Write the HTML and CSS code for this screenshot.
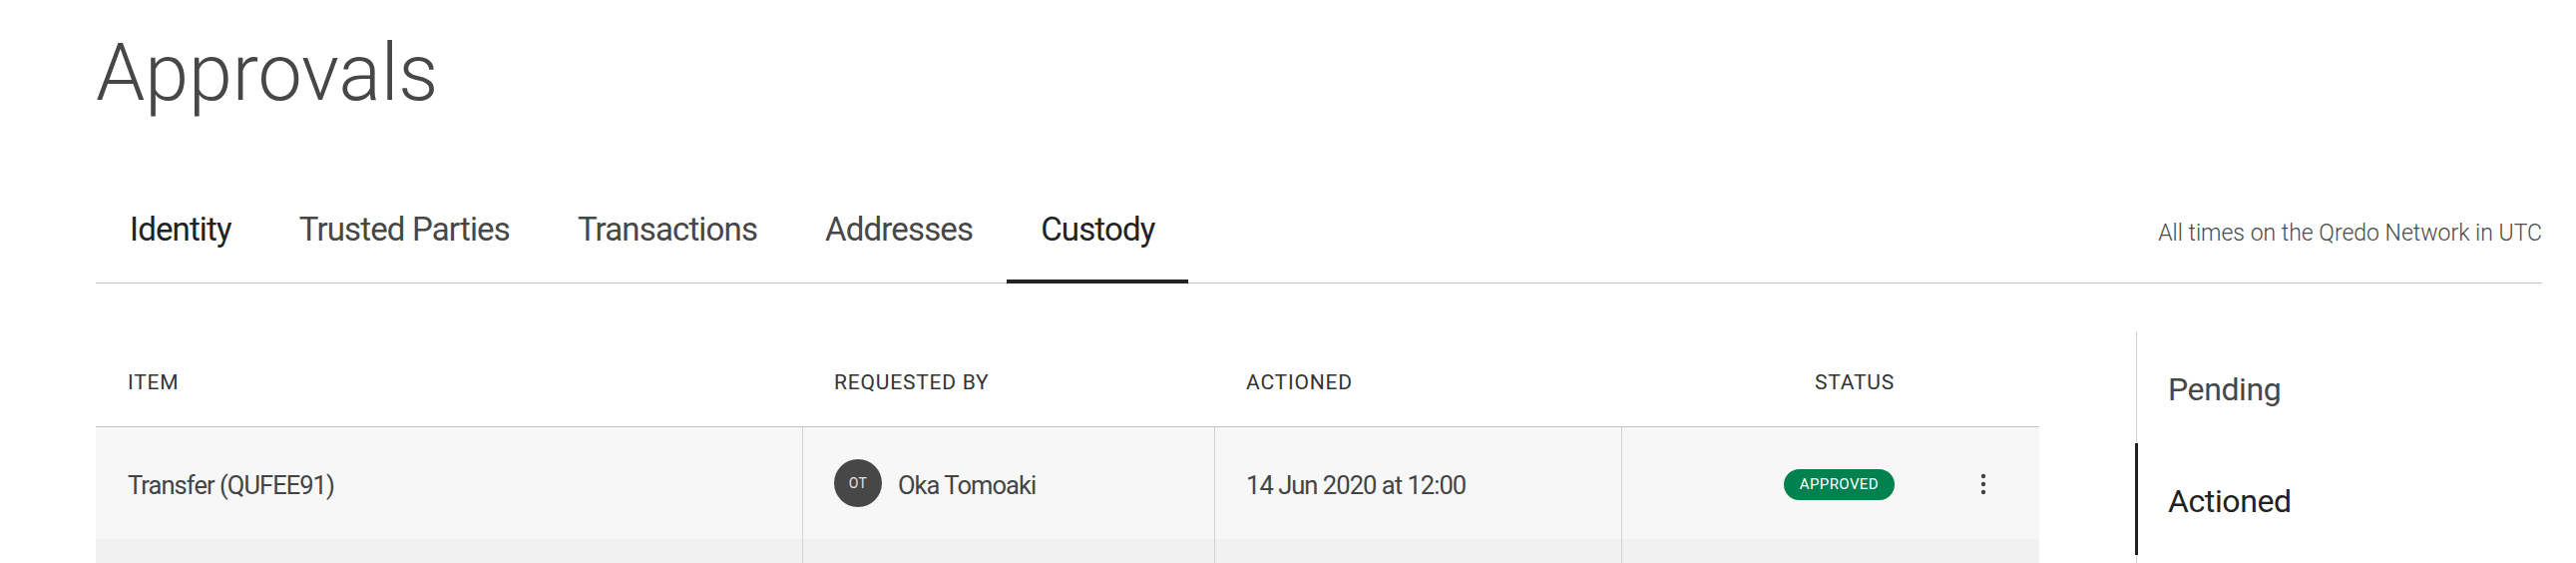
FILE: index.html
```html
<!DOCTYPE html>
<html lang="en">
<head>
<meta charset="utf-8">
<title>Approvals</title>
<link rel="stylesheet" href="styles.css">
</head>
<body>
<div class="page">
  <h1 class="title">Approvals</h1>

  <nav class="tabbar">
    <a class="tab tab-dark">Identity</a>
    <a class="tab">Trusted Parties</a>
    <a class="tab">Transactions</a>
    <a class="tab">Addresses</a>
    <a class="tab tab-active">Custody</a>
    <span class="tz-note">All times on the Qredo Network in UTC</span>
  </nav>

  <div class="content">
    <div class="table">
      <div class="row head">
        <div class="cell">Item</div>
        <div class="cell">Requested by</div>
        <div class="cell">Actioned</div>
        <div class="cell cell-status">Status</div>
        <div class="cell"></div>
      </div>
      <div class="row body-row">
        <div class="cell">Transfer (QUFEE91)</div>
        <div class="cell divided">
          <span class="avatar">OT</span>
          <span class="name">Oka Tomoaki</span>
        </div>
        <div class="cell divided">14 Jun 2020 at 12:00</div>
        <div class="cell divided cell-status"><span class="badge">APPROVED</span></div>
        <div class="cell cell-action">
          <svg class="kebab" width="6" height="22" viewBox="0 0 6 22" aria-hidden="true">
            <circle cx="3" cy="3" r="2.2"/>
            <circle cx="3" cy="11" r="2.2"/>
            <circle cx="3" cy="19" r="2.2"/>
          </svg>
        </div>
      </div>
      <div class="row body-row alt">
        <div class="cell"></div>
        <div class="cell divided"></div>
        <div class="cell divided"></div>
        <div class="cell divided"></div>
        <div class="cell"></div>
      </div>
    </div>

    <aside class="sidenav">
      <a class="side-item">Pending</a>
      <a class="side-item side-active">Actioned</a>
    </aside>
  </div>
</div>
</body>
</html>
```

FILE: styles.css
```css
html, body {
  margin: 0;
  padding: 0;
  background: #ffffff;
}

body {
  font-family: "Roboto", "Noto Sans", sans-serif;
  color: #444444;
}

.page {
  padding: 0 34px 0 96px;
}

.title {
  margin: 34px 0 0 0;
  font-size: 79px;
  line-height: 79px;
  font-weight: 300;
  letter-spacing: -0.1px;
  color: #474747;
}

.tabbar {
  display: flex;
  align-items: baseline;
  margin-top: 97px;
  box-shadow: inset 0 -1px 0 #c6c6c6;
}

.tab {
  display: block;
  padding: 0 34px 30px;
  border-bottom: 4px solid transparent;
  font-size: 33px;
  line-height: 40px;
  letter-spacing: -0.85px;
  color: #474747;
  cursor: pointer;
}

.tab-dark {
  color: #222222;
}

.tab-active {
  color: #222222;
  border-bottom-color: #222222;
}

.tz-note {
  margin-left: auto;
  font-size: 23px;
  line-height: 30px;
  font-weight: 300;
  color: #4a4a4a;
}

.content {
  display: grid;
  grid-template-columns: 1fr 407px;
  column-gap: 97px;
  margin-top: 48px;
}

.row {
  display: grid;
  grid-template-columns: 708px 413px 408px 306px 113px;
}

.cell {
  display: flex;
  align-items: center;
  padding: 0 32px;
  min-width: 0;
}

.head {
  height: 95px;
  border-bottom: 1px solid #c4c4c4;
}

.head .cell {
  font-size: 21px;
  font-weight: 400;
  letter-spacing: 0.8px;
  text-transform: uppercase;
  color: #333333;
  padding-top: 6px;
}

.body-row {
  height: 112px;
  background: #f7f7f7;
}

.body-row.alt {
  background: #f1f1f1;
}

.body-row .cell {
  font-size: 25.5px;
  letter-spacing: -0.95px;
  color: #444444;
  padding-top: 4px;
}

.body-row .cell-action {
  padding: 2px 0 0;
}

.divided {
  border-left: 1px solid #d2d2d2;
  padding-left: 31px !important;
}

.cell-status {
  justify-content: flex-end;
}

.cell-action {
  justify-content: center;
  padding: 0;
}

.avatar {
  flex: 0 0 48px;
  width: 48px;
  height: 48px;
  margin-top: -4px;
  border-radius: 50%;
  background: #474747;
  color: #e2e2e2;
  font-size: 14px;
  letter-spacing: 0.3px;
  display: flex;
  align-items: center;
  justify-content: center;
  margin-right: 16px;
}

.badge {
  display: inline-flex;
  align-items: center;
  height: 31px;
  margin-top: -2px;
  padding: 0 16px;
  border-radius: 16px;
  background: #008150;
  color: #ffffff;
  font-size: 15px;
  font-weight: 400;
  letter-spacing: 0.4px;
}

.kebab {
  fill: #444444;
  display: block;
}

.sidenav {
  border-left: 1px solid #d4d4d4;
  display: flex;
  flex-direction: column;
}

.side-item {
  display: flex;
  align-items: center;
  height: 112px;
  box-sizing: border-box;
  padding-top: 3px;
  margin-left: -2px;
  padding-left: 30px;
  border-left: 3px solid transparent;
  font-size: 32px;
  color: #474747;
  letter-spacing: -0.4px;
  cursor: pointer;
}

.side-active {
  border-left-color: #222222;
  color: #222222;
}
```
